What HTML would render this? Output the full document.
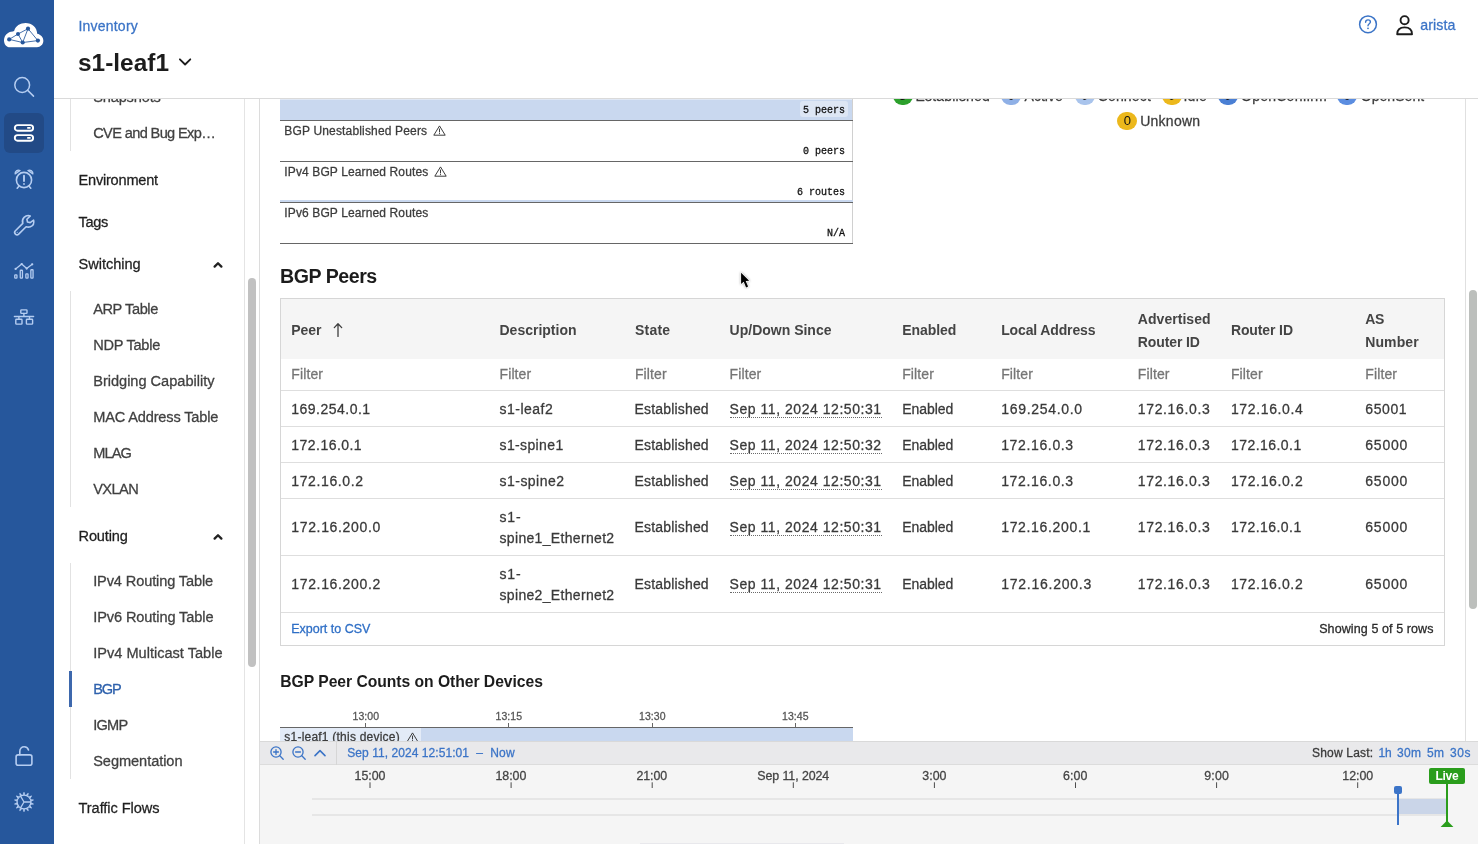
<!DOCTYPE html>
<html lang="en">
<head>
<meta charset="utf-8">
<title>s1-leaf1 - BGP</title>
<style>
*{box-sizing:border-box;margin:0;padding:0}
html,body{width:1478px;height:844px;overflow:hidden;background:#fff}
body{font-family:"Liberation Sans",sans-serif;font-size:14px;color:#3c3c3c;position:relative;will-change:transform}
.abs{position:absolute}
.t{position:absolute;white-space:pre;line-height:20px;height:20px;-webkit-text-stroke:.28px currentColor}
.mono{font-family:"Liberation Mono",monospace}
.hl{position:absolute;height:1px}
.vl{position:absolute;width:1px}
#side{left:0;top:0;width:54px;height:844px;background:#26579c;z-index:6}
#side svg{position:absolute;overflow:visible}
#hdr{left:54px;top:0;width:1424px;height:99px;background:#fff;border-bottom:1px solid #dadada;z-index:5}
#foot{left:260px;top:741px;width:1218px;height:103px;background:#f5f5f5;z-index:5}
svg{position:absolute;overflow:visible}
.dot{position:absolute;width:20px;height:18px;border-radius:9px;text-align:center;font-size:13px;line-height:18px;color:#111}
.und{border-bottom:1px dotted #777}
</style>
</head>
<body>
<!-- ============ SIDEBAR ============ -->
<div id="side" class="abs">
  <!-- logo cloud -->
  <svg style="left:3px;top:22px;filter:drop-shadow(0.6px 0.6px 0.3px rgba(10,30,80,.45))" width="42" height="27" viewBox="0 0 42 27">
    <path d="M7 25.2 C3 25.2 1 22 1 18.4 C1 13.6 4.6 9.5 9.6 9.4 Q10.6 9.3 11.2 8.8 C12.5 4 17 1.1 22.6 1.1 C29 1.1 34 5.5 34.2 11.8 C38 12.5 40.4 15.5 40.4 18.8 C40.4 22.5 37.5 25.2 34 25.2 Z" fill="#fff"/>
    <g stroke="#26579c" stroke-width="0.85" fill="none">
      <path d="M6.2 17.4 L15 12 L25 6.7 L34.9 18.6 L19.7 20.5 L6.2 17.4 M15 12 L19.7 20.5 L25 6.7"/>
    </g>
    <g fill="#26579c">
      <circle cx="6.2" cy="17.4" r="2.1"/><circle cx="15" cy="12" r="2"/><circle cx="25" cy="6.7" r="2.1"/><circle cx="34.9" cy="18.6" r="2.1"/><circle cx="19.7" cy="20.5" r="2.1"/>
    </g>
  </svg>
  <!-- search -->
  <svg style="left:12px;top:75px" width="24" height="24" viewBox="0 0 24 24" fill="none" stroke="#b5cdf1" stroke-width="1.5" stroke-linecap="round">
    <circle cx="10.2" cy="10" r="7.4"/><path d="M15.7 15.4 L21.5 21.1"/>
  </svg>
  <!-- inventory (active) -->
  <div class="abs" style="left:4px;top:113px;width:40px;height:40px;border-radius:6px;background:#224a86"></div>
  <svg style="left:12px;top:122px" width="24" height="22" viewBox="0 0 24 22" fill="none" stroke="#fff" stroke-width="1.9">
    <rect x="2.8" y="3.1" width="18.3" height="5.6" rx="2.8"/>
    <rect x="2.8" y="13.1" width="18.3" height="5.6" rx="2.8"/>
    <path d="M15.2 5.9 h3.4 M15.2 15.9 h3.4" stroke-width="1.8"/>
  </svg>
  <!-- alarm -->
  <svg style="left:12px;top:167px" width="24" height="24" viewBox="0 0 24 24" fill="none" stroke="#b5cdf1" stroke-width="1.6" stroke-linecap="round">
    <circle cx="12" cy="13" r="7.6"/>
    <path d="M12 8.6 V14" stroke-width="1.9"/><circle cx="12" cy="17" r="0.9" fill="#b5cdf1" stroke="none"/>
    <path d="M3.1 6.9 C2.6 4.3 5.6 2.2 8.1 3.5 Z M20.9 6.9 C21.4 4.3 18.4 2.2 15.9 3.5 Z" fill="#b5cdf1" fill-opacity=".55" stroke-width="1.2" stroke-linejoin="round"/>
    <path d="M6.9 19.2 L5.2 21.2 M17.1 19.2 L18.8 21.2"/>
  </svg>
  <!-- wrench -->
  <svg style="left:12px;top:213px" width="24" height="24" viewBox="0 0 24 24" fill="none" stroke="#b5cdf1" stroke-width="1.6" stroke-linejoin="round" stroke-linecap="round">
    <path d="M21.6 7.2 C22.3 10 20.9 12.7 18.4 13.7 C16.9 14.3 15.4 14.2 14.1 13.7 L6.7 21.1 C5.8 22 4.3 22 3.4 21.1 C2.5 20.2 2.5 18.7 3.4 17.8 L10.8 10.4 C10.1 8.400000000000001 10.5 6 12.1 4.4 C13.8 2.7 16.2 2.2 18.3 2.9 L14.9 6.3 L15.5 9 L18.2 9.6 Z"/><circle cx="5.2" cy="19.3" r="0.55" fill="#b5cdf1" stroke="none"/>
  </svg>
  <!-- chart -->
  <svg style="left:12px;top:259px" width="24" height="24" viewBox="0 0 24 24" fill="none" stroke="#b5cdf1" stroke-width="1.3" stroke-linejoin="round" stroke-linecap="round">
    <path d="M3.6 9.9 L9.7 5.1 L14.7 9.6 L20.2 5.3"/>
    <g fill="#b5cdf1" stroke="none"><circle cx="3.6" cy="9.9" r="1.15"/><circle cx="9.7" cy="5.1" r="1.15"/><circle cx="14.7" cy="9.6" r="1.15"/><circle cx="20.2" cy="5.3" r="1.15"/></g>
    <rect x="2.75" y="15.85" width="2.2" height="3.2" rx="0.6"/>
    <rect x="8.25" y="11.25" width="2.2" height="7.8" rx="0.6"/>
    <rect x="13.85" y="14.85" width="2.2" height="4.2" rx="0.6"/>
    <rect x="18.85" y="10.75" width="2.2" height="8.3" rx="0.6"/>
  </svg>
  <!-- topology -->
  <svg style="left:12px;top:305px" width="24" height="24" viewBox="0 0 24 24" fill="none" stroke="#b5cdf1" stroke-width="1.4" stroke-linejoin="round">
    <rect x="8.8" y="4.9" width="6.2" height="3.5" rx="0.7"/>
    <rect x="3.8" y="14.2" width="6.2" height="4.9" rx="0.7"/>
    <rect x="14.4" y="14.2" width="6.2" height="4.9" rx="0.7"/>
    <path d="M11.9 8.4 V11.5 M2.4 11.5 H21.6 M6.9 11.5 V14.2 M17.5 11.5 V14.2" stroke-linecap="round"/>
  </svg>
  <!-- unlock -->
  <svg style="left:12px;top:744px" width="24" height="24" viewBox="0 0 24 24" fill="none" stroke="#b5cdf1" stroke-width="1.6" stroke-linecap="round" stroke-linejoin="round">
    <rect x="4.1" y="10.9" width="15.8" height="10.3" rx="2"/>
    <path d="M7.8 10.8 V7.2 C7.8 4.6 9.7 2.8 12.2 2.8 C14.3 2.8 16 4.1 16.5 6"/>
  </svg>
  <!-- gear -->
  <svg style="left:12px;top:790px" width="24" height="24" viewBox="0 0 24 24" fill="none" stroke="#b5cdf1" stroke-width="1.3" stroke-linejoin="round">
    <path d="M10.83 4.80 L11.64 2.01 L12.36 2.01 L13.17 4.80 Z M14.07 5.00 L16.01 2.84 L16.66 3.15 L16.18 6.02 Z M16.90 6.59 L19.59 5.49 L20.04 6.05 L18.37 8.43 Z M18.76 9.25 L21.66 9.43 L21.82 10.13 L19.29 11.54 Z M19.29 12.46 L21.82 13.87 L21.66 14.57 L18.76 14.75 Z M18.37 15.57 L20.04 17.95 L19.59 18.51 L16.90 17.41 Z M16.18 17.98 L16.66 20.85 L16.01 21.16 L14.07 19.00 Z M13.17 19.20 L12.36 21.99 L11.64 21.99 L10.83 19.20 Z M9.93 19.00 L7.99 21.16 L7.34 20.85 L7.82 17.98 Z M7.10 17.41 L4.41 18.51 L3.96 17.95 L5.63 15.57 Z M5.24 14.75 L2.34 14.57 L2.18 13.87 L4.71 12.46 Z M4.71 11.54 L2.18 10.13 L2.34 9.43 L5.24 9.25 Z M5.63 8.43 L3.96 6.05 L4.41 5.49 L7.10 6.59 Z M7.82 6.02 L7.34 3.15 L7.99 2.84 L9.93 5.00 Z" fill="#b5cdf1" stroke="none"/>
    <circle cx="12" cy="12" r="6.9"/>
    <path d="M12 12 L8.7 6.3 M12 12 L8.7 17.7 M12 12 H18.6" stroke-linecap="round"/>
  </svg>
</div>
<!-- ============ HEADER ============ -->
<div id="hdr" class="abs"></div>
<div class="abs" style="z-index:6;left:0;top:0;width:0;height:0">
<div class="t" style="top:16.3px;font-size:14px;left:78.4px;color:#3b74c7;letter-spacing:0.223px;">Inventory</div>
<div class="t" style="top:53.0px;font-size:24.4px;left:78.0px;font-weight:700;-webkit-text-stroke:0;color:#1c1c1c;letter-spacing:0.018px;line-height:30px;height:30px;margin-top:-5px;">s1-leaf1</div>
<svg style="left:178px;top:56px" width="14" height="12" viewBox="0 0 14 12" fill="none" stroke="#1c1c1c" stroke-width="1.8" stroke-linecap="round" stroke-linejoin="round"><path d="M1.9 3.3 L7.1 8.5 L12.3 3.3"/></svg>
<svg style="left:1358px;top:14px" width="20" height="20" viewBox="0 0 20 20" fill="none" stroke="#3b74c7" stroke-width="1.5" stroke-linecap="round"><circle cx="10" cy="10.3" r="8.4"/><path d="M7.6 8.2 C7.6 6.7 8.7 5.9 10 5.9 C11.4 5.9 12.4 6.8 12.4 8 C12.4 9.6 10 9.8 10 11.7" stroke-width="1.4"/><circle cx="10" cy="14.3" r="0.9" fill="#3b74c7" stroke="none"/></svg>
<svg style="left:1394px;top:13px" width="22" height="24" viewBox="0 0 22 24" fill="none" stroke="#1c1c1c" stroke-width="1.9" stroke-linejoin="round"><circle cx="10.6" cy="7.2" r="4.05"/><path d="M3.2 21.2 C3.2 16.6 6.2 14.4 10.6 14.4 C15 14.4 18 16.6 18 21.2 Z"/></svg>
<div class="t" style="top:15.3px;font-size:14.2px;left:1420.3px;color:#3b74c7;letter-spacing:0.083px;">arista</div>
</div>
<!-- ============ NAV ============ -->
<div class="vl" style="left:244px;top:99px;height:745px;background:#e4e4e4"></div>
<div class="vl" style="left:259px;top:99px;height:745px;background:#dcdcdc"></div>
<div class="abs" style="left:248px;top:278px;width:8px;height:389px;border-radius:4px;background:#c1c1c1"></div>
<div class="vl" style="left:70px;top:60px;height:91px;background:#e2e2e2"></div>
<div class="vl" style="left:70px;top:291px;height:216px;background:#e2e2e2"></div>
<div class="vl" style="left:70px;top:563px;height:216px;background:#e2e2e2"></div>
<div class="abs" style="left:69px;top:671px;width:3px;height:36px;background:#3d68ad"></div>
<div class="t" style="top:170.2px;font-size:14.58px;left:78.5px;color:#1f1f1f;letter-spacing:-0.222px;">Environment</div>
<div class="t" style="top:211.8px;font-size:14.58px;left:78.5px;color:#1f1f1f;letter-spacing:-0.299px;">Tags</div>
<div class="t" style="top:254.2px;font-size:14.58px;left:78.5px;color:#1f1f1f;letter-spacing:-0.034px;">Switching</div>
<div class="t" style="top:526.2px;font-size:14.58px;left:78.5px;color:#1f1f1f;letter-spacing:-0.150px;">Routing</div>
<div class="t" style="top:798.0px;font-size:14.58px;left:78.5px;color:#1f1f1f;letter-spacing:-0.062px;">Traffic Flows</div>
<div class="t" style="top:87.0px;font-size:14.58px;left:93.2px;color:#414141;letter-spacing:-0.155px;">Snapshots</div>
<div class="t" style="top:123.0px;font-size:14.58px;left:93.2px;color:#414141;letter-spacing:-0.631px;">CVE and Bug Exp…</div>
<div class="t" style="top:299.1px;font-size:14.58px;left:93.2px;color:#414141;letter-spacing:-0.407px;">ARP Table</div>
<div class="t" style="top:335.1px;font-size:14.58px;left:93.2px;color:#414141;letter-spacing:-0.262px;">NDP Table</div>
<div class="t" style="top:371.1px;font-size:14.58px;left:93.2px;color:#414141;letter-spacing:-0.014px;">Bridging Capability</div>
<div class="t" style="top:407.1px;font-size:14.58px;left:93.2px;color:#414141;letter-spacing:-0.157px;">MAC Address Table</div>
<div class="t" style="top:443.1px;font-size:14.58px;left:93.2px;color:#414141;letter-spacing:-0.857px;">MLAG</div>
<div class="t" style="top:479.1px;font-size:14.58px;left:93.2px;color:#414141;letter-spacing:-0.562px;">VXLAN</div>
<div class="t" style="top:571.1px;font-size:14.58px;left:93.2px;color:#414141;letter-spacing:-0.128px;">IPv4 Routing Table</div>
<div class="t" style="top:607.1px;font-size:14.58px;left:93.2px;color:#414141;letter-spacing:-0.106px;">IPv6 Routing Table</div>
<div class="t" style="top:643.1px;font-size:14.58px;left:93.2px;color:#414141;">IPv4 Multicast Table</div>
<div class="t" style="top:679.1px;font-size:14.58px;left:93.2px;color:#2f62ad;letter-spacing:-1.099px;">BGP</div>
<div class="t" style="top:715.1px;font-size:14.58px;left:93.2px;color:#414141;letter-spacing:-0.741px;">IGMP</div>
<div class="t" style="top:751.1px;font-size:14.58px;left:93.2px;color:#414141;letter-spacing:-0.056px;">Segmentation</div>
<svg style="left:212px;top:259.6px" width="12" height="10" viewBox="0 0 12 10" fill="none" stroke="#222" stroke-width="2.3" stroke-linecap="round" stroke-linejoin="round"><path d="M2.6 6.6 L6 3.2 L9.4 6.6"/></svg>
<svg style="left:212px;top:531.6px" width="12" height="10" viewBox="0 0 12 10" fill="none" stroke="#222" stroke-width="2.3" stroke-linecap="round" stroke-linejoin="round"><path d="M2.6 6.6 L6 3.2 L9.4 6.6"/></svg>
<!-- ============ MAIN ============ -->
<div class="abs" style="left:280px;top:90px;width:573px;height:30px;background:#c9d8ef"></div>
<div class="abs" style="left:280px;top:96px;width:573px;height:4px;background:#e0e8f5"></div>
<div class="abs" style="left:800px;top:101px;width:48px;height:16px;border-radius:3px;background:#dde6f4"></div>
<div class="vl" style="left:852px;top:99px;height:144px;background:#d0d0d0"></div>
<div class="hl" style="left:280px;top:200px;width:573px;height:2px;background:#c9d8ef"></div>
<div class="hl" style="left:280px;top:120px;width:573px;background:#666"></div>
<div class="hl" style="left:280px;top:161px;width:573px;background:#666"></div>
<div class="hl" style="left:280px;top:202px;width:573px;background:#666"></div>
<div class="hl" style="left:280px;top:243px;width:573px;background:#666"></div>
<div class="t" style="top:101.3px;font-size:10px;left:803.0px;color:#111;font-family:'Liberation Mono',monospace;">5 peers</div>
<div class="t" style="top:142.4px;font-size:10px;left:803.0px;color:#111;font-family:'Liberation Mono',monospace;">0 peers</div>
<div class="t" style="top:183.3px;font-size:10px;left:797.0px;color:#111;font-family:'Liberation Mono',monospace;">6 routes</div>
<div class="t" style="top:224.3px;font-size:10px;left:827.0px;color:#111;font-family:'Liberation Mono',monospace;">N/A</div>
<div class="t" style="top:120.9px;font-size:12px;left:284.3px;color:#3c3c3c;letter-spacing:0.165px;">BGP Unestablished Peers</div>
<div class="t" style="top:161.8px;font-size:12px;left:284.3px;color:#3c3c3c;letter-spacing:0.122px;">IPv4 BGP Learned Routes</div>
<div class="t" style="top:202.9px;font-size:12px;left:284.3px;color:#3c3c3c;letter-spacing:0.122px;">IPv6 BGP Learned Routes</div>
<svg style="left:432.7px;top:125.0px" width="13" height="11" viewBox="0 0 13 11" fill="none" stroke="#333" stroke-width="0.95" stroke-linejoin="round"><path d="M6.5 0.9 L12.2 10.2 H0.8 Z"/><path d="M6.5 4 V7" stroke-linecap="round"/><circle cx="6.5" cy="8.6" r="0.55" fill="#333" stroke="none"/></svg>
<svg style="left:433.5px;top:166.1px" width="13" height="11" viewBox="0 0 13 11" fill="none" stroke="#333" stroke-width="0.95" stroke-linejoin="round"><path d="M6.5 0.9 L12.2 10.2 H0.8 Z"/><path d="M6.5 4 V7" stroke-linecap="round"/><circle cx="6.5" cy="8.6" r="0.55" fill="#333" stroke="none"/></svg>
<div class="dot" style="left:892.7px;top:86.8px;background:#2ca02c">5</div>
<div class="t" style="top:86.1px;font-size:14px;left:915.6px;color:#3c3c3c;letter-spacing:0.183px;">Established</div>
<div class="dot" style="left:1001.0px;top:86.8px;background:#8fb0e6">0</div>
<div class="t" style="top:86.1px;font-size:14px;left:1024.5px;color:#3c3c3c;letter-spacing:0.046px;">Active</div>
<div class="dot" style="left:1074.5px;top:86.8px;background:#a9c4ec">0</div>
<div class="t" style="top:86.1px;font-size:14px;left:1097.7px;color:#3c3c3c;letter-spacing:0.163px;">Connect</div>
<div class="dot" style="left:1161.5px;top:86.8px;background:#ecb81c">0</div>
<div class="t" style="top:86.1px;font-size:14px;left:1183.5px;color:#3c3c3c;letter-spacing:0.230px;">Idle</div>
<div class="dot" style="left:1217.5px;top:86.8px;background:#4a7fd4">0</div>
<div class="t" style="top:86.1px;font-size:14px;left:1241.0px;color:#3c3c3c;letter-spacing:0.249px;">OpenConfirm</div>
<div class="dot" style="left:1337.0px;top:86.8px;background:#5b8de0">0</div>
<div class="t" style="top:86.1px;font-size:14px;left:1360.7px;color:#3c3c3c;letter-spacing:0.055px;">OpenSent</div>
<div class="dot" style="left:1117.3px;top:112px;background:#ecb81c">0</div>
<div class="t" style="top:111.3px;font-size:14px;left:1140.2px;color:#3c3c3c;letter-spacing:0.261px;">Unknown</div>
<div class="t" style="top:265.8px;font-size:19.6px;left:280.0px;font-weight:700;-webkit-text-stroke:0;color:#1c1c1c;letter-spacing:-0.460px;line-height:26px;height:26px;margin-top:-3px;">BGP Peers</div>
<svg style="left:739px;top:271px;z-index:4;filter:drop-shadow(0 0.6px 0.8px rgba(0,0,0,.35))" width="14" height="20" viewBox="0 0 14 20"><path d="M2.1 1.8 L2.1 13.1 L4.7 10.8 L7.1 16.4 L9.1 15.5 L6.7 10 L10.2 9.8 Z" fill="#000" stroke="#fff" stroke-width="1.2" stroke-linejoin="round" paint-order="stroke"/></svg>
<div class="abs" style="left:280px;top:298px;width:1165px;height:348px;border:1px solid #d6d6d6;background:#fff"></div>
<div class="abs" style="left:281px;top:299px;width:1163px;height:60px;background:#f5f5f5"></div>
<div class="hl" style="left:281px;top:390px;width:1163px;background:#dedede"></div>
<div class="hl" style="left:281px;top:426px;width:1163px;background:#dedede"></div>
<div class="hl" style="left:281px;top:462px;width:1163px;background:#dedede"></div>
<div class="hl" style="left:281px;top:498px;width:1163px;background:#dedede"></div>
<div class="hl" style="left:281px;top:555px;width:1163px;background:#dedede"></div>
<div class="hl" style="left:281px;top:612px;width:1163px;background:#dedede"></div>
<div class="t" style="top:319.9px;font-size:14px;left:291.3px;font-weight:700;-webkit-text-stroke:0;color:#444;letter-spacing:-0.090px;">Peer</div>
<div class="t" style="top:319.9px;font-size:14px;left:499.5px;font-weight:700;-webkit-text-stroke:0;color:#444;">Description</div>
<div class="t" style="top:319.9px;font-size:14px;left:634.9px;font-weight:700;-webkit-text-stroke:0;color:#444;letter-spacing:0.253px;">State</div>
<div class="t" style="top:319.9px;font-size:14px;left:729.6px;font-weight:700;-webkit-text-stroke:0;color:#444;">Up/Down Since</div>
<div class="t" style="top:319.9px;font-size:14px;left:902.2px;font-weight:700;-webkit-text-stroke:0;color:#444;letter-spacing:-0.067px;">Enabled</div>
<div class="t" style="top:319.9px;font-size:14px;left:1001.2px;font-weight:700;-webkit-text-stroke:0;color:#444;letter-spacing:-0.136px;">Local Address</div>
<div class="t" style="top:319.9px;font-size:14px;left:1230.9px;font-weight:700;-webkit-text-stroke:0;color:#444;letter-spacing:-0.111px;">Router ID</div>
<div class="t" style="top:309.2px;font-size:14px;left:1137.8px;font-weight:700;-webkit-text-stroke:0;color:#444;letter-spacing:0.044px;">Advertised</div>
<div class="t" style="top:332.2px;font-size:14px;left:1137.8px;font-weight:700;-webkit-text-stroke:0;color:#444;letter-spacing:-0.111px;">Router ID</div>
<div class="t" style="top:309.2px;font-size:14px;left:1365.3px;font-weight:700;-webkit-text-stroke:0;color:#444;letter-spacing:-0.427px;">AS</div>
<div class="t" style="top:332.2px;font-size:14px;left:1365.3px;font-weight:700;-webkit-text-stroke:0;color:#444;letter-spacing:0.082px;">Number</div>
<svg style="left:332px;top:322px" width="12" height="16" viewBox="0 0 12 16" fill="none" stroke="#3d3d3d" stroke-width="1.3" stroke-linecap="round" stroke-linejoin="round"><path d="M6 14.4 V1.8 M2.3 5.6 L6 1.8 L9.7 5.6"/></svg>
<div class="t" style="top:363.9px;font-size:14px;left:291.3px;color:#757575;letter-spacing:0.113px;">Filter</div>
<div class="t" style="top:363.9px;font-size:14px;left:499.5px;color:#757575;letter-spacing:0.113px;">Filter</div>
<div class="t" style="top:363.9px;font-size:14px;left:634.9px;color:#757575;letter-spacing:0.113px;">Filter</div>
<div class="t" style="top:363.9px;font-size:14px;left:729.6px;color:#757575;letter-spacing:0.113px;">Filter</div>
<div class="t" style="top:363.9px;font-size:14px;left:902.2px;color:#757575;letter-spacing:0.113px;">Filter</div>
<div class="t" style="top:363.9px;font-size:14px;left:1001.2px;color:#757575;letter-spacing:0.113px;">Filter</div>
<div class="t" style="top:363.9px;font-size:14px;left:1137.8px;color:#757575;letter-spacing:0.113px;">Filter</div>
<div class="t" style="top:363.9px;font-size:14px;left:1230.9px;color:#757575;letter-spacing:0.113px;">Filter</div>
<div class="t" style="top:363.9px;font-size:14px;left:1365.3px;color:#757575;letter-spacing:0.113px;">Filter</div>
<div class="t" style="top:399.3px;font-size:14px;left:291.3px;color:#3a3a3a;letter-spacing:0.485px;">169.254.0.1</div>
<div class="t" style="top:399.3px;font-size:14px;left:499.5px;color:#3a3a3a;letter-spacing:0.498px;">s1-leaf2</div>
<div class="t" style="top:399.3px;font-size:14px;left:634.6px;color:#3a3a3a;letter-spacing:0.164px;">Established</div>
<div class="t" style="top:399.3px;font-size:14px;left:729.6px;color:#3a3a3a;letter-spacing:0.540px;border-bottom:1px dotted #6a6a6a;height:19px;">Sep 11, 2024 12:50:31</div>
<div class="t" style="top:399.3px;font-size:14px;left:902.2px;color:#3a3a3a;letter-spacing:-0.027px;">Enabled</div>
<div class="t" style="top:399.3px;font-size:14px;left:1001.2px;color:#3a3a3a;letter-spacing:0.694px;">169.254.0.0</div>
<div class="t" style="top:399.3px;font-size:14px;left:1137.8px;color:#3a3a3a;letter-spacing:0.643px;">172.16.0.3</div>
<div class="t" style="top:399.3px;font-size:14px;left:1230.9px;color:#3a3a3a;letter-spacing:0.643px;">172.16.0.4</div>
<div class="t" style="top:399.3px;font-size:14px;left:1365.3px;color:#3a3a3a;letter-spacing:0.592px;">65001</div>
<div class="t" style="top:435.3px;font-size:14px;left:291.3px;color:#3a3a3a;letter-spacing:0.463px;">172.16.0.1</div>
<div class="t" style="top:435.3px;font-size:14px;left:499.5px;color:#3a3a3a;letter-spacing:0.377px;">s1-spine1</div>
<div class="t" style="top:435.3px;font-size:14px;left:634.6px;color:#3a3a3a;letter-spacing:0.164px;">Established</div>
<div class="t" style="top:435.3px;font-size:14px;left:729.6px;color:#3a3a3a;letter-spacing:0.540px;border-bottom:1px dotted #6a6a6a;height:19px;">Sep 11, 2024 12:50:32</div>
<div class="t" style="top:435.3px;font-size:14px;left:902.2px;color:#3a3a3a;letter-spacing:-0.027px;">Enabled</div>
<div class="t" style="top:435.3px;font-size:14px;left:1001.2px;color:#3a3a3a;letter-spacing:0.643px;">172.16.0.3</div>
<div class="t" style="top:435.3px;font-size:14px;left:1137.8px;color:#3a3a3a;letter-spacing:0.643px;">172.16.0.3</div>
<div class="t" style="top:435.3px;font-size:14px;left:1230.9px;color:#3a3a3a;letter-spacing:0.463px;">172.16.0.1</div>
<div class="t" style="top:435.3px;font-size:14px;left:1365.3px;color:#3a3a3a;letter-spacing:0.753px;">65000</div>
<div class="t" style="top:471.3px;font-size:14px;left:291.3px;color:#3a3a3a;letter-spacing:0.623px;">172.16.0.2</div>
<div class="t" style="top:471.3px;font-size:14px;left:499.5px;color:#3a3a3a;letter-spacing:0.477px;">s1-spine2</div>
<div class="t" style="top:471.3px;font-size:14px;left:634.6px;color:#3a3a3a;letter-spacing:0.164px;">Established</div>
<div class="t" style="top:471.3px;font-size:14px;left:729.6px;color:#3a3a3a;letter-spacing:0.540px;border-bottom:1px dotted #6a6a6a;height:19px;">Sep 11, 2024 12:50:31</div>
<div class="t" style="top:471.3px;font-size:14px;left:902.2px;color:#3a3a3a;letter-spacing:-0.027px;">Enabled</div>
<div class="t" style="top:471.3px;font-size:14px;left:1001.2px;color:#3a3a3a;letter-spacing:0.643px;">172.16.0.3</div>
<div class="t" style="top:471.3px;font-size:14px;left:1137.8px;color:#3a3a3a;letter-spacing:0.643px;">172.16.0.3</div>
<div class="t" style="top:471.3px;font-size:14px;left:1230.9px;color:#3a3a3a;letter-spacing:0.623px;">172.16.0.2</div>
<div class="t" style="top:471.3px;font-size:14px;left:1365.3px;color:#3a3a3a;letter-spacing:0.753px;">65000</div>
<div class="t" style="top:517.2px;font-size:14px;left:291.3px;color:#3a3a3a;letter-spacing:0.654px;">172.16.200.0</div>
<div class="t" style="top:506.8px;font-size:14px;left:499.5px;color:#3a3a3a;letter-spacing:0.849px;">s1-</div>
<div class="t" style="top:527.6px;font-size:14px;left:499.5px;color:#3a3a3a;letter-spacing:0.327px;">spine1_Ethernet2</div>
<div class="t" style="top:517.2px;font-size:14px;left:634.6px;color:#3a3a3a;letter-spacing:0.164px;">Established</div>
<div class="t" style="top:517.2px;font-size:14px;left:729.6px;color:#3a3a3a;letter-spacing:0.540px;border-bottom:1px dotted #6a6a6a;height:19px;">Sep 11, 2024 12:50:31</div>
<div class="t" style="top:517.2px;font-size:14px;left:902.2px;color:#3a3a3a;letter-spacing:-0.027px;">Enabled</div>
<div class="t" style="top:517.2px;font-size:14px;left:1001.2px;color:#3a3a3a;letter-spacing:0.671px;">172.16.200.1</div>
<div class="t" style="top:517.2px;font-size:14px;left:1137.8px;color:#3a3a3a;letter-spacing:0.643px;">172.16.0.3</div>
<div class="t" style="top:517.2px;font-size:14px;left:1230.9px;color:#3a3a3a;letter-spacing:0.463px;">172.16.0.1</div>
<div class="t" style="top:517.2px;font-size:14px;left:1365.3px;color:#3a3a3a;letter-spacing:0.753px;">65000</div>
<div class="t" style="top:574.1px;font-size:14px;left:291.3px;color:#3a3a3a;letter-spacing:0.654px;">172.16.200.2</div>
<div class="t" style="top:563.7px;font-size:14px;left:499.5px;color:#3a3a3a;letter-spacing:0.849px;">s1-</div>
<div class="t" style="top:584.5px;font-size:14px;left:499.5px;color:#3a3a3a;letter-spacing:0.327px;">spine2_Ethernet2</div>
<div class="t" style="top:574.1px;font-size:14px;left:634.6px;color:#3a3a3a;letter-spacing:0.164px;">Established</div>
<div class="t" style="top:574.1px;font-size:14px;left:729.6px;color:#3a3a3a;letter-spacing:0.540px;border-bottom:1px dotted #6a6a6a;height:19px;">Sep 11, 2024 12:50:31</div>
<div class="t" style="top:574.1px;font-size:14px;left:902.2px;color:#3a3a3a;letter-spacing:-0.027px;">Enabled</div>
<div class="t" style="top:574.1px;font-size:14px;left:1001.2px;color:#3a3a3a;letter-spacing:0.754px;">172.16.200.3</div>
<div class="t" style="top:574.1px;font-size:14px;left:1137.8px;color:#3a3a3a;letter-spacing:0.643px;">172.16.0.3</div>
<div class="t" style="top:574.1px;font-size:14px;left:1230.9px;color:#3a3a3a;letter-spacing:0.623px;">172.16.0.2</div>
<div class="t" style="top:574.1px;font-size:14px;left:1365.3px;color:#3a3a3a;letter-spacing:0.753px;">65000</div>
<div class="t" style="top:618.6px;font-size:12.5px;left:291.2px;color:#2f6fc6;">Export to CSV</div>
<div class="t" style="top:618.6px;font-size:12.5px;left:1319.2px;color:#2a2a2a;letter-spacing:0.097px;">Showing 5 of 5 rows</div>
<div class="t" style="top:671.9px;font-size:15.7px;left:280.3px;font-weight:700;-webkit-text-stroke:0;color:#1c1c1c;letter-spacing:-0.040px;">BGP Peer Counts on Other Devices</div>
<div class="t" style="top:705.6px;font-size:10.5px;left:352.6px;color:#555;letter-spacing:0.024px;">13:00</div>
<div class="vl" style="left:365px;top:723px;height:4px;background:#666"></div>
<div class="t" style="top:705.6px;font-size:10.5px;left:495.6px;color:#555;letter-spacing:0.024px;">13:15</div>
<div class="vl" style="left:508px;top:723px;height:4px;background:#666"></div>
<div class="t" style="top:705.6px;font-size:10.5px;left:639.1px;color:#555;letter-spacing:0.024px;">13:30</div>
<div class="vl" style="left:652px;top:723px;height:4px;background:#666"></div>
<div class="t" style="top:705.6px;font-size:10.5px;left:782.1px;color:#555;letter-spacing:0.024px;">13:45</div>
<div class="vl" style="left:795px;top:723px;height:4px;background:#666"></div>
<div class="hl" style="left:280px;top:727px;width:573px;background:#666"></div>
<div class="abs" style="left:280px;top:728px;width:573px;height:14px;background:#c9d8ef"></div>
<div class="abs" style="left:280px;top:728px;width:141px;height:14px;background:#e3ebf7"></div>
<div class="t" style="top:727.2px;font-size:12px;left:284.3px;color:#3c3c3c;letter-spacing:0.222px;">s1-leaf1 (this device)</div>
<svg style="left:406.2px;top:731.6px" width="13" height="11" viewBox="0 0 13 11" fill="none" stroke="#333" stroke-width="0.95" stroke-linejoin="round"><path d="M6.5 0.9 L12.2 10.2 H0.8 Z"/><path d="M6.5 4 V7" stroke-linecap="round"/><circle cx="6.5" cy="8.6" r="0.55" fill="#333" stroke="none"/></svg>
<div class="vl" style="left:1465px;top:99px;height:642px;background:#e0e0e0"></div>
<div class="abs" style="left:1469px;top:290px;width:8px;height:319px;border-radius:4px;background:#bcbfbc"></div>
<!-- ============ FOOTER ============ -->
<div id="foot" class="abs"></div>
<div class="abs" style="z-index:6;left:0;top:0;width:0;height:0">
<div class="abs" style="left:260px;top:741px;width:1218px;height:24px;background:#e9e9eb;border-top:1px solid #d9d9d9;border-bottom:1px solid #dcdcdc"></div>
<svg style="left:269px;top:745px" width="16" height="16" viewBox="0 0 16 16" fill="none" stroke="#3b74c7" stroke-width="1.3" stroke-linecap="round"><circle cx="7" cy="7" r="5.1"/><path d="M10.8 10.8 L14.2 14.2 M4.6 7 H9.4 M7 4.6 V9.4"/></svg>
<svg style="left:291px;top:745px" width="16" height="16" viewBox="0 0 16 16" fill="none" stroke="#3b74c7" stroke-width="1.3" stroke-linecap="round"><circle cx="7" cy="7" r="5.1"/><path d="M10.8 10.8 L14.2 14.2 M4.6 7 H9.4"/></svg>
<svg style="left:313px;top:746px" width="14" height="14" viewBox="0 0 14 14" fill="none" stroke="#3b74c7" stroke-width="1.6" stroke-linecap="round" stroke-linejoin="round"><path d="M2 9.6 L7 4.6 L12 9.6"/></svg>
<div class="vl" style="left:336px;top:742px;height:23px;background:#d6d6d6"></div>
<div class="t" style="top:742.9px;font-size:12px;left:347.3px;color:#3b74c7;letter-spacing:0.054px;">Sep 11, 2024 12:51:01</div>
<div class="t" style="top:742.9px;font-size:12px;left:476.3px;color:#3b74c7;">–</div>
<div class="t" style="top:742.9px;font-size:12px;left:490.2px;color:#3b74c7;letter-spacing:0.261px;">Now</div>
<div class="t" style="top:742.9px;font-size:12px;left:1312.0px;color:#3a3a3a;letter-spacing:0.192px;">Show Last:</div>
<div class="t" style="top:742.9px;font-size:12px;left:1378.6px;color:#3b74c7;letter-spacing:-0.380px;">1h</div>
<div class="t" style="top:742.9px;font-size:12px;left:1397.0px;color:#3b74c7;letter-spacing:0.319px;">30m</div>
<div class="t" style="top:742.9px;font-size:12px;left:1427.1px;color:#3b74c7;letter-spacing:0.164px;">5m</div>
<div class="t" style="top:742.9px;font-size:12px;left:1450.0px;color:#3b74c7;letter-spacing:0.547px;">30s</div>
<div class="t" style="top:765.5px;font-size:12.4px;left:354.6px;color:#444;letter-spacing:-0.043px;">15:00</div>
<div class="t" style="top:765.5px;font-size:12.4px;left:495.5px;color:#444;letter-spacing:-0.043px;">18:00</div>
<div class="t" style="top:765.5px;font-size:12.4px;left:636.4px;color:#444;letter-spacing:-0.043px;">21:00</div>
<div class="t" style="top:765.5px;font-size:12.4px;left:757.2px;color:#444;letter-spacing:-0.068px;">Sep 11, 2024</div>
<div class="t" style="top:765.5px;font-size:12.4px;left:922.2px;color:#444;letter-spacing:0.069px;">3:00</div>
<div class="t" style="top:765.5px;font-size:12.4px;left:1062.9px;color:#444;letter-spacing:0.169px;">6:00</div>
<div class="t" style="top:765.5px;font-size:12.4px;left:1204.3px;color:#444;letter-spacing:0.169px;">9:00</div>
<div class="t" style="top:765.5px;font-size:12.4px;left:1342.3px;color:#444;letter-spacing:-0.043px;">12:00</div>
<svg style="left:0;top:0" width="1478" height="844" viewBox="0 0 1478 844" stroke="#4a4a4a" stroke-width="1"><line x1="370.00" y1="782.3" x2="370.00" y2="788"/><line x1="511.10" y1="782.3" x2="511.10" y2="788"/><line x1="652.20" y1="782.3" x2="652.20" y2="788"/><line x1="793.30" y1="782.3" x2="793.30" y2="788"/><line x1="934.40" y1="782.3" x2="934.40" y2="788"/><line x1="1075.49" y1="782.3" x2="1075.49" y2="788"/><line x1="1216.59" y1="782.3" x2="1216.59" y2="788"/><line x1="1357.69" y1="782.3" x2="1357.69" y2="788"/></svg>
<div class="hl" style="left:312px;top:798px;width:1134px;height:2px;background:#e6e6e6"></div>
<div class="hl" style="left:312px;top:814px;width:1134px;height:2px;background:#e6e6e6"></div>
<div class="abs" style="left:1399px;top:799px;width:47px;height:15px;background:#cad5e8"></div>
<div class="abs" style="left:1394px;top:786px;width:8px;height:8px;border-radius:2px;background:#3c74c8"></div>
<div class="abs" style="left:1397px;top:792px;width:2px;height:33px;background:#3c74c8"></div>
<div class="abs" style="left:1429px;top:768px;width:36px;height:16px;border-radius:2px;background:#2a9d1c"></div>
<div class="t" style="top:765.8px;font-size:12px;left:1435.4px;font-weight:700;-webkit-text-stroke:0;color:#fff;letter-spacing:-0.254px;">Live</div>
<div class="abs" style="left:1446px;top:784px;width:2px;height:40px;background:#2a9d1c"></div>
<svg style="left:1440px;top:820px" width="14" height="8" viewBox="0 0 14 8"><path d="M7 0.4 L13.4 7 H0.6 Z" fill="#2a9d1c"/></svg>
<div class="hl" style="left:640px;top:843px;width:204px;background:#e8e8ec"></div>
</div>
</body>
</html>
